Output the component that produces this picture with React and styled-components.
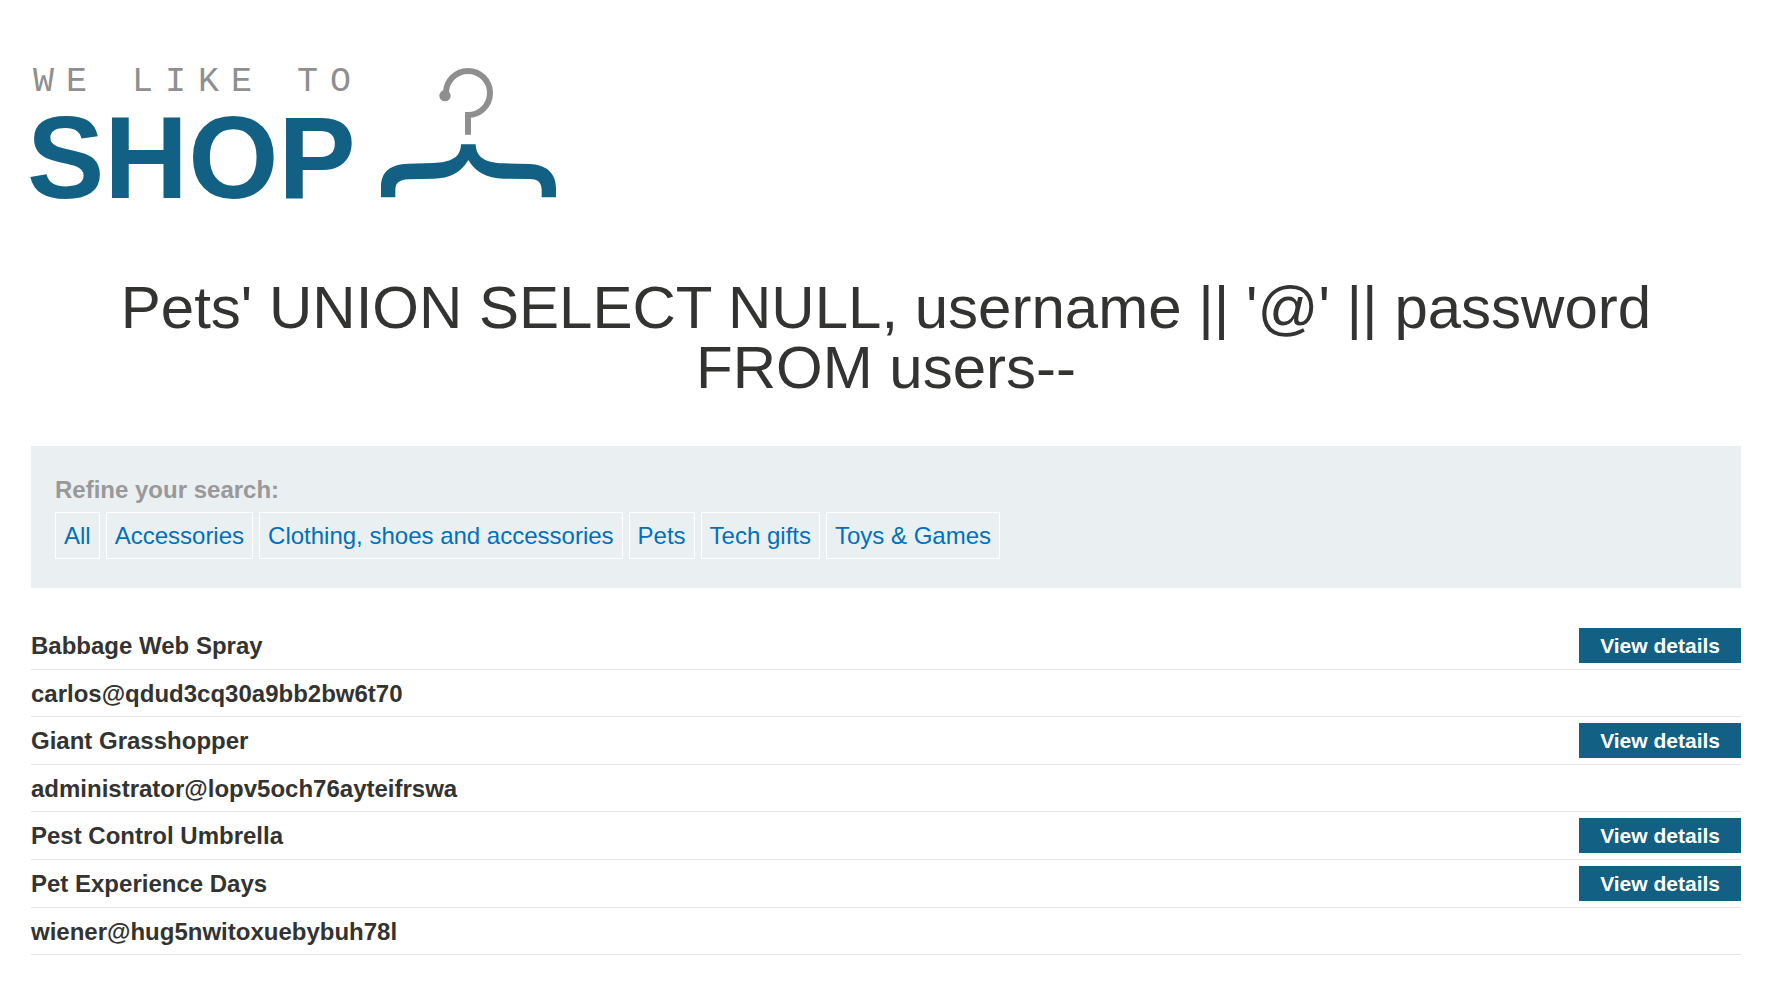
import React from "react";
import styled, { createGlobalStyle } from "styled-components";

const GlobalStyle = createGlobalStyle`
  *, *::before, *::after { box-sizing: border-box; }
  body {
    margin: 0;
    background: #fff;
    color: #333332;
    font: 24px/29px Arial, "Liberation Sans", sans-serif;
  }
`;

const Page = styled.main`
  padding: 60px 41px 38px 31px;
`;

const Logo = styled.svg`
  display: block;
  width: 530px;
  height: 150px;
  overflow: visible;
`;

const Tagline = styled.text`
  font: 35px "Liberation Mono", monospace;
  letter-spacing: 12px;
  fill: #8f8f90;
`;

const Brand = styled.text`
  font: bold 116px "Liberation Sans", sans-serif;
  fill: #126083;
`;

const Title = styled.h1`
  margin: 68px 0 48px;
  font-size: 60px;
  line-height: 60px;
  font-weight: 400;
  text-align: center;
`;

const Filters = styled.nav`
  padding: 29px 24px;
  background: #eaeff2;
`;

const FilterLabel = styled.h2`
  margin: 0 0 8px;
  font-size: 24px;
  line-height: 29px;
  color: #999;
`;

const FilterList = styled.div`
  display: flex;
  flex-wrap: wrap;
  gap: 6px;
`;

const FilterLink = styled.a`
  padding: 8px;
  border: 1px solid #fff;
  color: #0071bc;
  line-height: 29px;
  text-decoration: none;
`;

const Products = styled.table`
  width: 100%;
  margin-top: 34px;
  border-spacing: 0;
`;

const Row = styled.tr`
  height: ${(p) => (p.$tall ? 48 : 47)}px;
`;

const Name = styled.th`
  padding: 0;
  border-bottom: 1px solid #e5e5e5;
  text-align: left;
`;

const Action = styled.td`
  padding: 0;
  border-bottom: 1px solid #e5e5e5;
  text-align: right;
`;

const DetailsLink = styled.a`
  display: inline-block;
  padding: 0 21px;
  background: #126083;
  color: #fff;
  font-size: 21px;
  font-weight: 700;
  line-height: 35px;
  vertical-align: middle;
  text-decoration: none;
`;

const categories = [
  "All",
  "Accessories",
  "Clothing, shoes and accessories",
  "Pets",
  "Tech gifts",
  "Toys & Games",
];

const products = [
  { name: "Babbage Web Spray", details: true },
  { name: "carlos@qdud3cq30a9bb2bw6t70" },
  { name: "Giant Grasshopper", details: true },
  { name: "administrator@lopv5och76ayteifrswa" },
  { name: "Pest Control Umbrella", details: true },
  { name: "Pet Experience Days", details: true },
  { name: "wiener@hug5nwitoxuebybuh78l" },
];

function ShopLogo() {
  return (
    <Logo viewBox="0 0 530 150">
      <Tagline x="2" y="31">WE LIKE TO</Tagline>
      <Brand x="-4" y="138">SHOP</Brand>
      <g transform="translate(339 -10) scale(0.33333)">
        <path
          d="M228 133 V129 A66 66 0 1 1 294 195 V254"
          fill="none"
          stroke="#8f8f90"
          strokeWidth="18"
        />
        <path d="M285 186 H303 V204 H285 Z" fill="#8f8f90" />
        <circle cx="225" cy="137" r="17" fill="#8f8f90" />
        <path
          d="M33 442 V412 C33 365 60 343 115 341 L190 339 C240 337 272 325 273 283 H317 C318 325 350 339 400 340 L478 342 C530 344 558 370 558 415 V442 H515 V418 C513 395 502 387 478 387 L400 386 C350 384 318 368 295 330 C272 368 240 385 190 386 L115 388 C90 390 76 397 76 420 V442 Z"
          fill="#126083"
        />
      </g>
    </Logo>
  );
}

export default function App() {
  return (
    <>
      <GlobalStyle />
      <Page>
        <ShopLogo />
        <Title>
          Pets' UNION SELECT NULL, username || '@' || password FROM users--
        </Title>
        <Filters>
          <FilterLabel>Refine your search:</FilterLabel>
          <FilterList>
            {categories.map((c) => (
              <FilterLink key={c} href="#">{c}</FilterLink>
            ))}
          </FilterList>
        </Filters>
        <Products>
          <tbody>
            {products.map((p) => (
              <Row key={p.name} $tall={p.details}>
                <Name scope="row">{p.name}</Name>
                <Action>
                  {p.details && <DetailsLink href="#">View details</DetailsLink>}
                </Action>
              </Row>
            ))}
          </tbody>
        </Products>
      </Page>
    </>
  );
}
